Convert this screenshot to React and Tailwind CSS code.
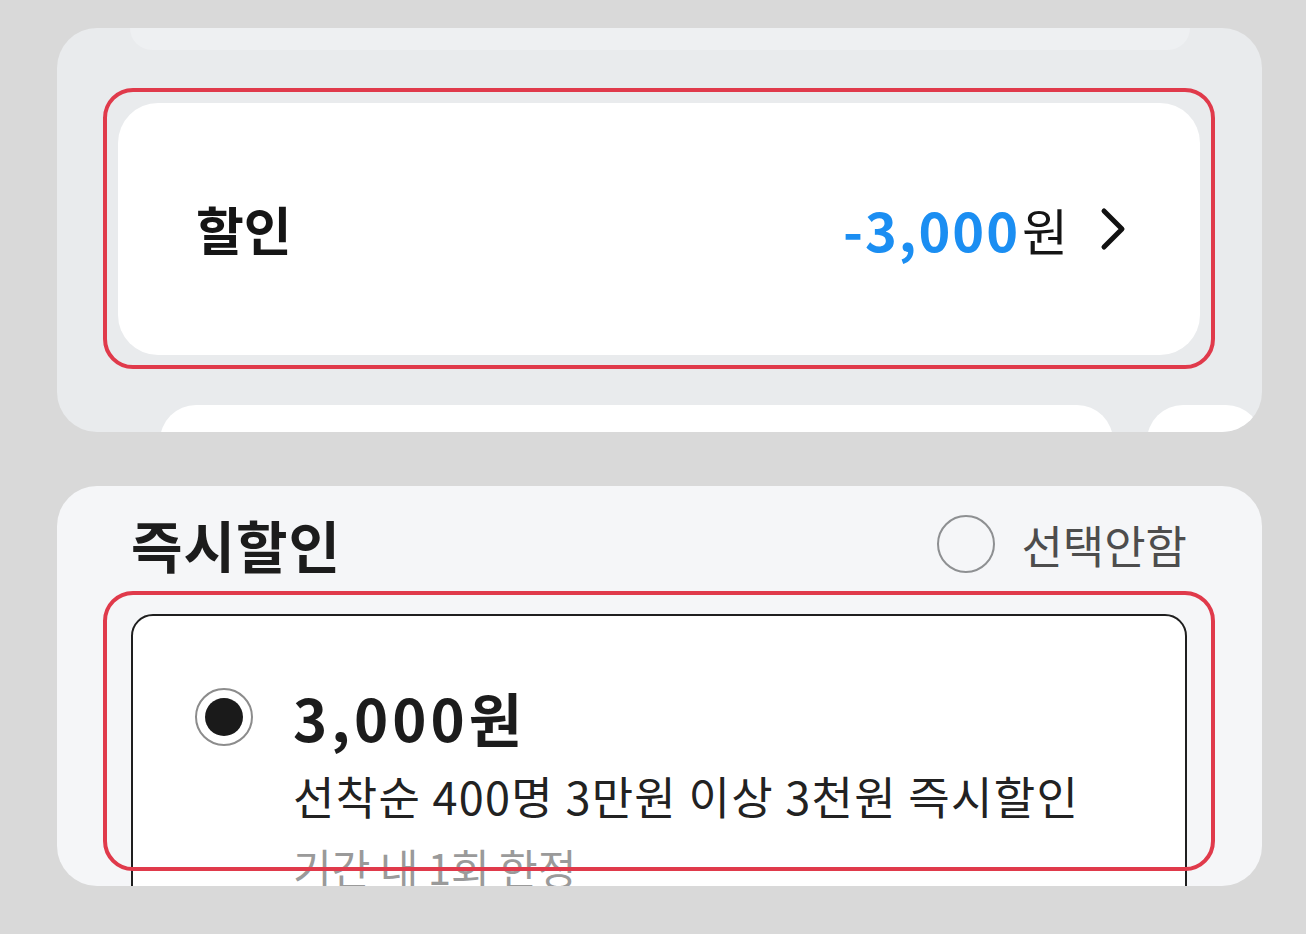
const font = { fontFamily: '"Noto Sans CJK KR", "Noto Sans", sans-serif' };

const ChevronRight = () => (
  <svg width="26" height="44" viewBox="0 0 26 44" fill="none" stroke="#111" strokeWidth="5" strokeLinecap="round" strokeLinejoin="round">
    <polyline points="4,4 22,22 4,40" />
  </svg>
);

const RedMark = ({ className }) => (
  <div className={`pointer-events-none absolute left-[46px] w-[1112px] rounded-[30px] border-[4px] border-[#e03a4b] ${className}`} />
);

const DiscountPanel = () => (
  <div className="relative ml-[57px] h-[404px] w-[1205px] overflow-hidden rounded-[40px] bg-[#e9ebed]">
    <div className="ml-[73px] h-[22px] w-[1060px] rounded-b-[30px] bg-[#eef0f2]" />
    <div className="mt-[53px] ml-[61px] flex h-[252px] w-[1082px] items-center justify-between rounded-[40px] bg-white pl-[78px] pr-[74px]">
      <span className="text-[52px] font-bold leading-none text-[#151515]">할인</span>
      <div className="flex items-center">
        <span className="text-[54px] font-bold leading-none tracking-[2px] text-[#1b8ef2]">-3,000</span>
        <span className="ml-[2px] text-[50px] leading-none text-[#151515]">원</span>
        <span className="ml-[32px] flex items-center">
          <ChevronRight />
        </span>
      </div>
    </div>
    <div className="mt-[50px] flex gap-[34px]">
      <div className="ml-[103px] h-[40px] w-[992px] rounded-t-[36px] bg-white" />
      <div className="h-[40px] w-[120px] rounded-t-[36px] bg-white" />
    </div>
    <RedMark className="top-[60px] h-[281px]" />
  </div>
);

const InstantPanel = () => (
  <div className="relative mt-[54px] ml-[57px] h-[400px] w-[1205px] overflow-hidden rounded-[40px] bg-[#f5f6f8]">
    <div className="flex items-center justify-between pt-[29px] pl-[74px] pr-[75px]">
      <span className="text-[56px] font-bold leading-none tracking-[1px] text-[#1c1c1c]">즉시할인</span>
      <div className="flex items-center gap-[26px]">
        <div className="h-[58px] w-[58px] rounded-full border-2 border-[#8e9092]" />
        <span className="text-[45px] leading-none text-[#4d4d4d]">선택안함</span>
      </div>
    </div>
    <div className="mt-[41px] ml-[74px] h-[300px] w-[1056px] rounded-[22px] border-2 border-[#1f1f1f] bg-white pt-[72px] pl-[62px]">
      <div className="flex items-center gap-[40px]">
        <div className="flex h-[58px] w-[58px] items-center justify-center rounded-full border-2 border-[#8c8c8c]">
          <div className="h-[38px] w-[38px] rounded-full bg-[#1a1a1a]" />
        </div>
        <span className="text-[58px] font-bold leading-none tracking-[4px] text-[#1c1c1c]">3,000원</span>
      </div>
      <div className="mt-[27px] pl-[98px] text-[45px] leading-none tracking-[1.3px] text-[#222]">
        선착순 400명 3만원 이상 3천원 즉시할인
      </div>
      <div className="mt-[28px] pl-[98px] text-[42px] leading-none text-[#9a9a9a]">
        기간 내 1회 한정
      </div>
    </div>
    <RedMark className="top-[105px] h-[280px]" />
  </div>
);

export default function App() {
  return (
    <div style={font} className="h-[934px] w-[1306px] overflow-hidden bg-[#d9d9d9] pt-[28px]">
      <DiscountPanel />
      <InstantPanel />
    </div>
  );
}
